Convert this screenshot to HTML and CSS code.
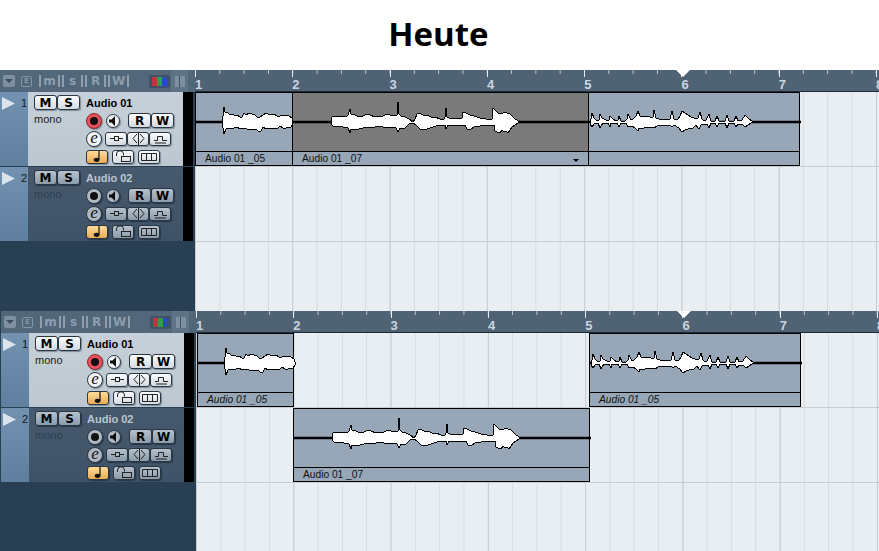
FILE: index.html
```html
<!DOCTYPE html>
<html lang="de">
<head>
  <meta charset="UTF-8">
  <title>Heute</title>
  <link rel="stylesheet" href="styles.css">
</head>
<body>

  <h1 class="title">Heute</h1>

  <!-- Wellenformen, Koordinaten relativ zum Event, Mittellinie bei y=0 -->
  <svg class="defs" width="0" height="0">
    <defs>
      <polygon id="wave-a" points="26,-1 27,-6 28,-15 29,-10 31,-10 33,-8 36,-8 38,-7 41,-7 44,-5 46,-5 48,-9 50,-7 53,-9 56,-8 59,-7 61,-5 64,-5 67,-7 70,-9 72,-8 75,-7 78,-8 81,-6 84,-6 86,-7 90,-7 93,-6 96,-4 97,-1 97,2 95,5 90,6 87,6 84,4 81,7 78,6 75,6 72,6 70,7 67,5 65,9 62,9 60,7 57,7 54,8 51,7 47,6 44,7 41,5 38,6 35,7 32,6 30,7 28,12 27,6 26,2"/>
      <polygon id="wave-b" points="38,-1 38,-4 40,-6 46,-5 50,-6 54,-6 55,-7 57,-13 58,-8 60,-8 64,-6 67,-6 70,-6 74,-8 77,-7 82,-5 86,-6 90,-6 94,-8 97,-7 102,-6 104,-7 105,-20 106,-8 108,-6 112,-5 116,-3 120,0 122,-3 124,-8 126,-9 130,-7 134,-7 138,-5 142,-5 147,-3 151,-3 152,-5 153,-14 154,-5 156,-4 162,-4 169,-4 170,-10 173,-9 177,-7 181,-6 187,-4 193,-3 199,-3 200,-14 202,-12 205,-9 207,-9 209,-8 211,-10 214,-9 217,-8 220,-5 222,-3 227,0 222,3 219,5 217,8 215,11 213,9 211,10 209,8 207,11 204,10 202,9 201,3 195,3 187,4 181,5 177,8 174,7 172,3 165,3 155,3 153,7 152,3 149,3 143,4 134,7 127,7 123,3 120,1 116,2 112,6 107,6 105,10 103,6 98,5 94,6 90,5 84,4 80,6 74,5 70,6 66,7 61,8 58,7 57,11 55,6 50,5 40,4 38,2"/>
      <polygon id="wave-c" points="1,0 2,-3 3,-9 5,-4 8,-1 10,-2 11,-8 13,-4 17,-2 20,-2 21,-6 24,-3 27,-1 29,-2 30,-6 32,-1 36,-1 38,-3 39,-8 42,-2 44,-3 47,-6 49,-11 51,-6 55,-6 59,-6 63,-4 64,-5 65,-12 67,-4 70,-3 75,-2 81,-3 83,-11 85,-3 89,-3 91,-6 93,-11 96,-9 99,-7 102,-5 105,-4 109,-4 111,-10 113,-3 115,-1 117,-2 120,-8 122,-1 126,-1 128,-6 130,-1 136,-1 138,-7 140,-1 145,-1 147,-6 149,-1 153,-2 156,-7 159,-4 164,0 159,3 156,5 153,2 149,2 147,5 145,1 140,1 138,6 136,1 130,1 128,5 126,1 122,1 120,6 118,2 115,2 112,3 110,7 107,3 104,6 99,7 96,8 93,10 90,6 85,3 83,5 81,3 75,3 68,4 65,6 60,5 55,6 50,6 49,9 46,6 43,4 39,5 37,1 32,1 30,5 28,1 22,1 21,5 19,1 14,1 11,6 9,1 6,1 3,5 1,2"/>
    </defs>
  </svg>

  <main id="panels"></main>

  <template id="track-tpl">
    <div class="track">
      <div class="track-strip">
        <svg class="track-arrow" width="13" height="13" viewBox="0 0 13 13"><polygon points="0,0 13,6.500 0,13"/></svg>
        <span class="track-num"></span>
      </div>
      <div class="track-body">
        <div class="track-left">
          <div class="btn-pair">
            <button class="btn btn-ms">M</button>
            <button class="btn btn-ms">S</button>
          </div>
          <div class="track-mono">mono</div>
        </div>
        <div class="track-right">
          <div class="track-name"></div>
          <div class="track-row">
            <span class="round round-rec"><i></i></span>
            <span class="round round-mon">
              <svg width="8" height="10" viewBox="0 0 8 10"><path d="M0 3.500h2.500L6 0v10L2.500 6.500H0z"/></svg>
            </span>
            <button class="btn btn-rw btn-r">R</button>
            <button class="btn btn-rw">W</button>
          </div>
          <div class="track-row">
            <span class="round round-e">e</span>
            <button class="btn btn-ins">
              <svg width="15" height="7" viewBox="0 0 15 7"><path d="M1 3.500h4M10 3.500h4" stroke="#222" fill="none"/><rect x="5.500" y="1.500" width="4" height="4" fill="none" stroke="#222"/></svg>
            </button>
            <button class="btn btn-ins btn-eq">
              <svg width="13" height="13" viewBox="0 0 13 13"><path d="M6.500 0v13M5 2 1 6.500 5 11M8 2l4 4.500L8 11" stroke="#222" fill="none"/></svg>
            </button>
            <button class="btn btn-ins">
              <svg width="15" height="10" viewBox="0 0 15 10"><path d="M1 6.500h3.500V2.500h5v4H14M2 9h11" stroke="#222" fill="none"/></svg>
            </button>
          </div>
          <div class="track-row">
            <button class="btn btn-note">
              <svg width="8" height="11" viewBox="0 0 8 11"><path d="M6 0v8.500" stroke="#111" stroke-width="1.200"/><ellipse cx="3.600" cy="8.800" rx="2.900" ry="2.100" fill="#111"/></svg>
            </button>
            <button class="btn btn-lock">
              <svg width="17" height="13" viewBox="0 0 17 13"><path d="M1.500 6V4a3.500 3.200 0 0 1 7 0v1.500" stroke="#222" fill="none"/><rect x="6.500" y="6.500" width="9" height="5" fill="none" stroke="#222"/></svg>
            </button>
            <button class="btn btn-grid">
              <svg width="16" height="8" viewBox="0 0 16 8"><path d="M.5.5h15v7H.5zM5.500.5v7M10.500.5v7" stroke="#222" fill="none"/></svg>
            </button>
          </div>
        </div>
      </div>
      <div class="track-meter"></div>
    </div>
  </template>

  <template id="panel-tpl">
    <section class="panel">
      <div class="tracklist">
        <div class="tl-header">
          <span class="hb hb-drop"><svg width="8" height="4" viewBox="0 0 8 4"><polygon points="0,0 8,0 4,4"/></svg></span>
          <span class="hb hb-e">E</span>
          <span class="hb-group">
            <span class="hb hb-st">m</span>
            <span class="hb hb-st">s</span>
            <span class="hb hb-st">R</span>
            <span class="hb hb-st">W</span>
          </span>
          <span class="hb-rgb"><i class="c-r"></i><i class="c-g"></i><i class="c-b"></i></span>
          <span class="hb-last"><i></i></span>
        </div>
        <div class="tracks"></div>
      </div>
      <div class="arrange">
        <div class="ruler"><span class="playhead"></span></div>
        <div class="lanes"></div>
      </div>
    </section>
  </template>

  <script>
    // Vorher / nachher: gleiche Events, einmal auf einer Spur, einmal aufgeteilt
    const panels = [
      {
        cls: 'panel-a',
        lanes: [
          [
            { gap: 0, w: 98, wave: 'a', label: 'Audio 01 _05' },
            { gap: -1, w: 297, wave: 'b', label: 'Audio 01 _07', selected: true },
            { gap: -1, w: 212, wave: 'c', label: '' }
          ],
          []
        ]
      },
      {
        cls: 'panel-b',
        lanes: [
          [
            { gap: 1, w: 97, wave: 'a', label: 'Audio 01 _05', italic: true },
            { gap: 295, w: 212, wave: 'c', label: 'Audio 01 _05', italic: true }
          ],
          [
            { gap: 97, w: 297, wave: 'b', label: 'Audio 01 _07' }
          ]
        ]
      }
    ];
    const names = ['Audio 01', 'Audio 02'];
    const root = document.getElementById('panels');
    const panelTpl = document.getElementById('panel-tpl');
    const trackTpl = document.getElementById('track-tpl');

    function makeEvent(ev) {
      const el = document.createElement('div');
      el.className = 'event' + (ev.selected ? ' selected' : '') + (ev.italic ? ' italic' : '');
      el.style.width = ev.w + 'px';
      el.style.marginLeft = ev.gap + 'px';
      el.innerHTML =
        '<div class="event-body"><svg class="wave" width="100%" height="58">' +
        '<g transform="translate(0,29)"><line x1="0" x2="' + ev.w + '" y1="0" y2="0"/>' +
        '<use href="#wave-' + ev.wave + '"/></g></svg></div>' +
        '<div class="event-label"></div>';
      el.querySelector('.event-label').textContent = ev.label;
      return el;
    }

    panels.forEach(p => {
      const node = panelTpl.content.cloneNode(true);
      node.querySelector('.panel').classList.add(p.cls);

      // Takte 1-8 im Lineal
      const ruler = node.querySelector('.ruler');
      for (let i = 1; i <= 8; i++) {
        const b = document.createElement('span');
        b.className = 'bar-num';
        b.textContent = i;
        ruler.appendChild(b);
      }

      names.forEach((name, i) => {
        const t = trackTpl.content.cloneNode(true);
        const track = t.querySelector('.track');
        if (i === 0) track.classList.add('active');
        t.querySelector('.track-num').textContent = i + 1;
        t.querySelector('.track-name').textContent = name;
        node.querySelector('.tracks').appendChild(t);
      });

      p.lanes.forEach(events => {
        const lane = document.createElement('div');
        lane.className = 'lane';
        events.forEach(ev => lane.appendChild(makeEvent(ev)));
        node.querySelector('.lanes').appendChild(lane);
      });

      root.appendChild(node);
    });
  </script>

</body>
</html>
```

FILE: styles.css
```css
/* Grundlayout */
body {
  margin: 0;
  background: #fff;
  font-family: "Liberation Sans", sans-serif;
  overflow: hidden;
}
.title {
  margin: 0;
  height: 70px;
  display: flex;
  align-items: center;
  justify-content: center;
  font-family: "Open Sans", sans-serif;
  font-size: 33px;
  font-weight: 700;
  color: #000;
  padding: 0 2px 4px 0;
  box-sizing: border-box;
}
.defs { position: absolute; }

/* Panel */
.panel {
  display: flex;
  height: 241px;
  background: #283f54;
}
.panel-b { padding-left: 1px; }
.tracklist {
  width: 195px;
  flex: none;
  background: #283f54;
}

/* Kopfzeile der Spurliste */
.tl-header {
  height: 22px;
  background: #53677a;
  display: flex;
  align-items: center;
  padding-left: 3px;
  box-sizing: border-box;
}
.hb {
  display: flex;
  align-items: center;
  justify-content: center;
  height: 11px;
  background: #7f90a0;
  color: #53677a;
  font-size: 10px;
  font-weight: 700;
  font-family: "DejaVu Sans", sans-serif;
}
.hb-drop { width: 12px; height: 12px; border-radius: 2px; }
.hb-drop polygon { fill: #3b4d5e; }
.hb-e {
  width: 11px;
  height: 11px;
  margin-left: 6px;
  box-sizing: border-box;
  font-size: 7px;
  background: #53677a;
  color: #8495a5;
  border: 1px solid #8495a5;
  border-radius: 2px;
}
.hb-group {
  display: flex;
  gap: 2px;
  margin-left: 7px;
}
.hb-st {
  width: 21px;
  background: #53677a;
  color: #8e9eac;
  border-left: 2px solid #8e9eac;
  border-right: 2px solid #8e9eac;
  box-sizing: border-box;
  font-size: 12px;
  line-height: 12px;
  height: 12px;
}
.hb-rgb {
  display: flex;
  width: 21px;
  height: 13px;
  margin-left: 20px;
  background: #3f5266;
  padding: 2px 3px;
  box-sizing: border-box;
  border-radius: 2px;
}
.hb-rgb i { flex: 1; }
.c-r { background: #c0333f; }
.c-g { background: #2f9f4b; }
.c-b { background: #2a49c4; }
.hb-last {
  width: 17px;
  height: 22px;
  margin-left: 1px;
  background: #5f7386;
  display: flex;
  align-items: center;
  justify-content: center;
}
.hb-last i {
  width: 10px;
  height: 11px;
  background: linear-gradient(90deg, #7f90a0 0 4px, #3f5266 4px 5px, #7f90a0 5px);
}

/* Spuren */
.track {
  display: flex;
  height: 74px;
  margin-bottom: 1px;
}
.track-strip {
  width: 28px;
  flex: none;
  background: linear-gradient(#7392b2, #5f7f9f);
  display: flex;
  align-items: flex-start;
  padding: 5px 0 0 2px;
  box-sizing: border-box;
}
.track-arrow polygon { fill: #dbe4ec; }
.track-num {
  margin-left: 6px;
  font-size: 11px;
  line-height: 12px;
  color: #101820;
}
.track-body {
  flex: 1;
  display: flex;
  padding: 3px 0 0 6px;
  background: linear-gradient(#47596c, #3f5368);
}
.track.active .track-body { background: linear-gradient(#c7d0d8, #bcc7d1); }
.track-meter {
  width: 10px;
  margin-right: 2px;
  background: #000;
  flex: none;
}
.track-left { width: 52px; flex: none; }
.btn-pair { display: flex; }
.track-mono {
  margin-top: 3px;
  font-size: 11px;
  line-height: 13px;
  color: #2c3f52;
}
.track.active .track-mono { color: #222; }
.track-name {
  height: 15px;
  font-size: 11px;
  line-height: 17px;
  font-weight: 700;
  color: #b9c6d3;
}
.track.active .track-name { color: #000; }
.track-right {
  display: flex;
  flex-direction: column;
  gap: 3px;
}
.track-row {
  display: flex;
  align-items: center;
  height: 15px;
}

/* Buttons */
.btn {
  display: flex;
  align-items: center;
  justify-content: center;
  padding: 0;
  margin: 0;
  height: 14px;
  box-sizing: border-box;
  border: 1px solid #2a3642;
  border-radius: 3px;
  background: linear-gradient(#b6c2cd, #8b9baa);
  box-shadow: 1px 1px 1px #26374a;
  color: #000;
  font-family: "DejaVu Sans", sans-serif;
  font-size: 12px;
  font-weight: 700;
}
.track.active .btn {
  background: linear-gradient(#fbfcfd, #d3dae1);
  box-shadow: 1px 1px 1px #7f8c99;
}
.btn-ms { width: 23px; height: 15px; }
.btn-rw { width: 23px; height: 15px; }
.btn-r { margin-left: 8px; }
.btn-ins { width: 22px; height: 14px; }
.btn-ins:first-of-type { margin-left: 3px; }
.track .btn-note,
.track.active .btn-note {
  width: 22px;
  background: linear-gradient(#ffdc9a, #e9ab56);
}
.btn-lock { width: 22px; margin-left: 4px; }
.btn-grid { width: 22px; margin-left: 4px; }
.round {
  display: flex;
  align-items: center;
  justify-content: center;
  box-sizing: border-box;
  border-radius: 50%;
  border: 1px solid #2a3642;
  background: #aeb9c4;
  box-shadow: 1px 1px 1px #26374a;
  flex: none;
}
.track.active .round {
  background: #f2f4f6;
  box-shadow: 1px 1px 1px #7f8c99;
}
.round-rec { width: 16px; height: 16px; }
.round-rec i {
  width: 8px;
  height: 8px;
  border-radius: 50%;
  background: #111;
}
.track.active .round-rec { background: #e8505a; border-color: #8a2a30; }
.round-mon { width: 14px; height: 14px; margin-left: 4px; }
.round-mon svg { fill: #111; }
.round-e {
  width: 16px;
  height: 16px;
  font-family: "Liberation Serif", serif;
  font-style: italic;
  font-size: 17px;
  line-height: 14px;
  color: #111;
  padding-bottom: 2px;
}

/* Arrangement */
.arrange {
  flex: 1;
  min-width: 0;
  overflow: hidden;
}
.ruler {
  position: relative;
  display: flex;
  height: 22px;
  box-sizing: border-box;
  border-bottom: 1px solid #1c2a38;
  background-color: #506374;
  background-image: linear-gradient(90deg, #b8c5cf 1px, transparent 1px);
  background-size: 24.325px 4px;
  background-repeat: repeat-x;
}
/* Taktstriche im Lineal */
.bar-num {
  flex: none;
  width: 97.300px;
  padding-top: 8px;
  font-size: 13px;
  font-weight: 700;
  line-height: 13px;
  color: #c9d6e0;
  background: linear-gradient(#e6ecf1, #e6ecf1) no-repeat 0 0 / 1px 7px;
}
.playhead {
  position: absolute;
  left: 481px;
  top: 0;
  width: 0;
  height: 0;
  border-left: 7px solid transparent;
  border-right: 7px solid transparent;
  border-top: 7px solid #fff;
}
.lanes {
  height: 219px;
  background-color: #e9eef3;
  background-image:
    linear-gradient(90deg, #c8cdd2 1px, transparent 1px),
    linear-gradient(90deg, #d7dce0 1px, transparent 1px);
  background-size: 97.300px 100%, 24.325px 100%;
}
.lane {
  display: flex;
  height: 75px;
  box-sizing: border-box;
  border-bottom: 1px solid #c8cdd2;
}

/* Events */
.event {
  flex: none;
  height: 74px;
  box-sizing: border-box;
  border: 1px solid #000;
  background: #97a7b8;
  display: flex;
  flex-direction: column;
  position: relative;
}
.event-body { height: 58px; }
.event.selected .event-body { background: #7a7a7a; }
.wave { display: block; overflow: visible; }
.wave line { stroke: #000; stroke-width: 2.500; }
.wave use {
  fill: #fff;
  stroke: #000;
  stroke-width: 1;
  shape-rendering: crispEdges;
}
.event-label {
  flex: 1;
  border-top: 1px solid #000;
  padding-left: 9px;
  font-size: 10.200px;
  line-height: 13px;
  color: #111;
}
.event.italic .event-label { font-style: italic; }
/* kleiner Pfeil am ausgewaehlten Event */
.event.selected::after {
  content: '';
  position: absolute;
  right: 9px;
  bottom: 3px;
  border-left: 3px solid transparent;
  border-right: 3px solid transparent;
  border-top: 3px solid #000;
}
```
